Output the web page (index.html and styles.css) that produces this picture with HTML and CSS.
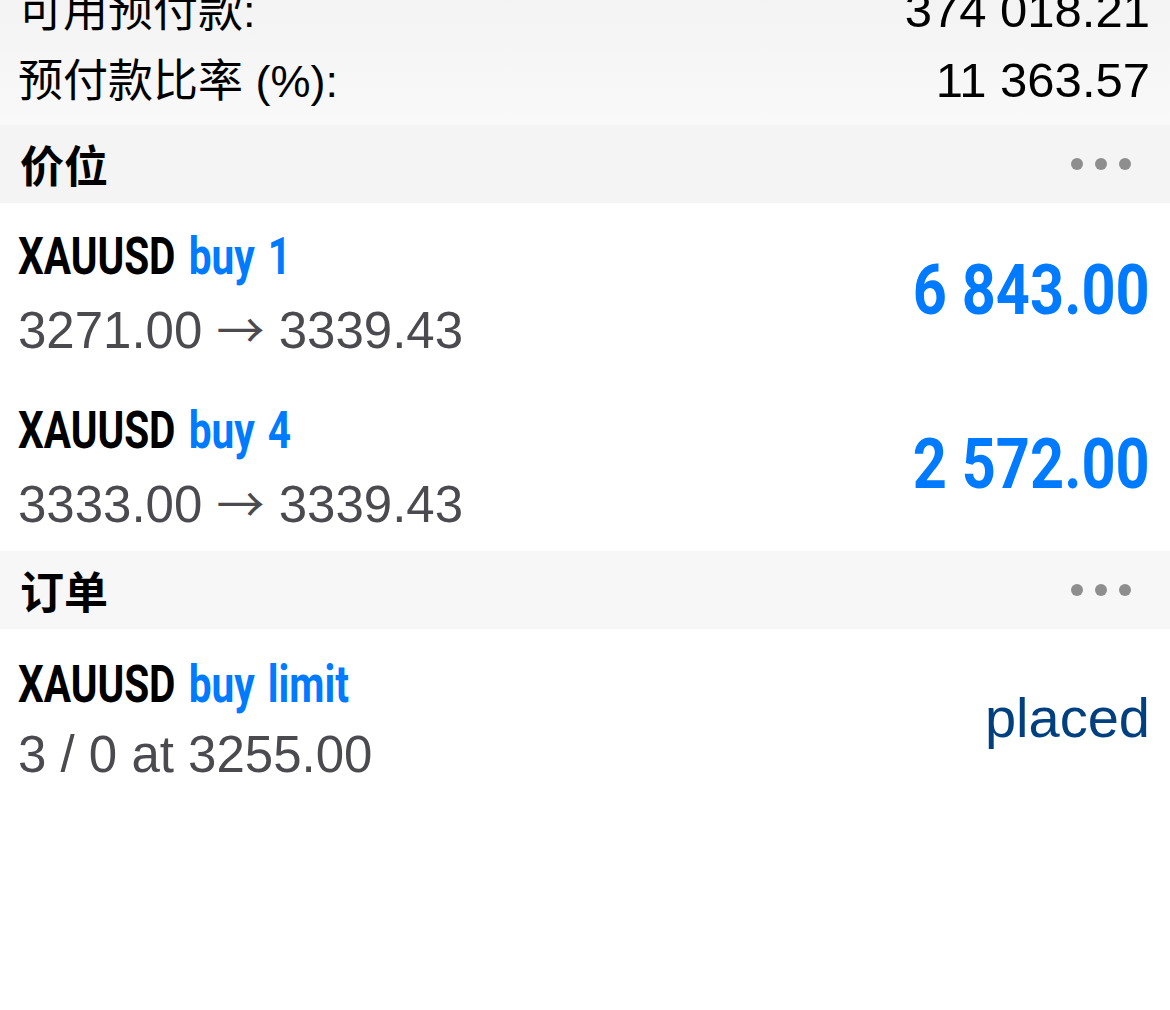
FILE: index.html
```html
<!DOCTYPE html>
<html>

<head>
  <meta charset="utf-8">
  <title>交易</title>
  <link rel="stylesheet" href="styles.css">
</head>

<body>
  <div class="summary">
    <div class="summary-row">
      <span class="summary-label">可用预付款:</span>
      <span class="summary-value">374 018.21</span>
    </div>
    <div class="summary-row">
      <span class="summary-label">预付款比率 (%):</span>
      <span class="summary-value">11 363.57</span>
    </div>
  </div>

  <div class="section-head">
    <span class="section-title">价位</span>
    <span class="more"><i></i><i></i><i></i></span>
  </div>
  <ul class="list">
    <li class="item">
      <div class="item-main">
        <div class="item-title"><span class="cond"><b>XAUUSD</b> <span class="side">buy 1</span></span></div>
        <div class="item-sub">3271.00 <span class="arrow">→</span> 3339.43</div>
      </div>
      <div class="item-value"><span class="cond">6 843.00</span></div>
    </li>
    <li class="item">
      <div class="item-main">
        <div class="item-title"><span class="cond"><b>XAUUSD</b> <span class="side">buy 4</span></span></div>
        <div class="item-sub">3333.00 <span class="arrow">→</span> 3339.43</div>
      </div>
      <div class="item-value"><span class="cond">2 572.00</span></div>
    </li>
  </ul>

  <div class="section-head section-head-light">
    <span class="section-title">订单</span>
    <span class="more"><i></i><i></i><i></i></span>
  </div>
  <ul class="list">
    <li class="item">
      <div class="item-main">
        <div class="item-title"><span class="cond"><b>XAUUSD</b> <span class="side">buy limit</span></span></div>
        <div class="item-sub">3 / 0 at 3255.00</div>
      </div>
      <div class="item-state">placed</div>
    </li>
  </ul>
</body>

</html>
```

FILE: styles.css
```css
body {
  margin: 0;
  background: #fff;
  font-family: "Liberation Sans", "Noto Sans CJK SC", sans-serif;
  color: #000;
}

ul {
  list-style-type: none;
  margin: 0;
  padding: 0;
}

.summary {
  margin-top: -25px;
  padding: 0 20px 10px 18px;
  background: linear-gradient(#f2f2f2, #f9f9f9);
}

.summary-row {
  display: flex;
  justify-content: space-between;
  align-items: baseline;
  height: 70px;
  line-height: 70px;
  font-size: 49px;
}

.summary-label {
  font-size: 45px;
}

.section-head {
  display: flex;
  justify-content: space-between;
  align-items: center;
  height: 78px;
  padding: 0 39px 0 20px;
  background: #f4f4f4;
}

.section-head-light {
  background: #f7f7f7;
}

.section-title {
  font-family: "Noto Sans CJK SC", sans-serif;
  font-weight: bold;
  font-size: 44px;
}

.more {
  display: flex;
  gap: 12px;
}

.more > i {
  width: 12px;
  height: 12px;
  border-radius: 50%;
  background: #8e8e8e;
}

.item {
  display: flex;
  justify-content: space-between;
  align-items: center;
  height: 174px;
  box-sizing: border-box;
  padding: 23px 20px 9px 18px;
}

.cond {
  display: inline-block;
  white-space: nowrap;
  font-family: Roboto, sans-serif;
  transform: scaleX(0.78);
  transform-origin: left center;
}

.item-title {
  font-size: 52px;
  line-height: 62px;
  word-spacing: 4px;
}

.item-title b {
  color: #000;
}

.side {
  color: #007aff;
  font-weight: bold;
}

.item-sub {
  font-size: 51px;
  line-height: 78px;
  color: #4a4a4f;
}

.arrow {
  font-family: "Noto Sans CJK SC", sans-serif;
  font-size: 48px;
}

.item-value {
  margin-top: -14px;
  font-size: 70px;
  font-weight: bold;
  color: #007aff;
}

.item-value .cond {
  transform: scaleX(0.85);
  transform-origin: right center;
}

.item-state {
  margin-top: -12px;
  font-size: 56px;
  color: #00407f;
}
```
